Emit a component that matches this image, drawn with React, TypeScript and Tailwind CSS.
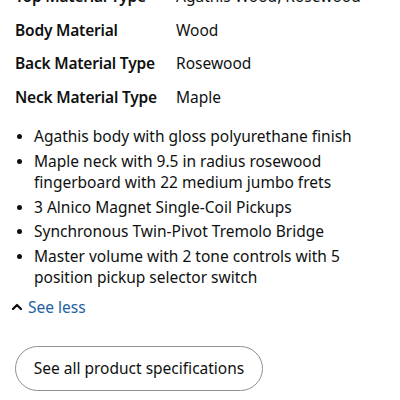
import { ChevronUp } from "lucide-react";

const specs: [string, string][] = [
    ["Top Material Type", "Agathis Wood, Rosewood"],
    ["Body Material", "Wood"],
    ["Back Material Type", "Rosewood"],
    ["Neck Material Type", "Maple"],
];

const features = [
    "Agathis body with gloss polyurethane finish",
    "Maple neck with 9.5 in radius rosewood fingerboard with 22 medium jumbo frets",
    "3 Alnico Magnet Single-Coil Pickups",
    "Synchronous Twin-Pivot Tremolo Bridge",
    "Master volume with 2 tone controls with 5 position pickup selector switch",
];

export default function App() {
    return (
        <div className="w-[400px] h-[400px] overflow-hidden bg-white text-[#0f1111] font-['Noto_Sans',sans-serif]">
            <div className="px-[15px] -mt-[20px]">
                {specs.map(([label, value]) => (
                    <div key={label} className="flex h-[33.5px] items-center text-[15.5px]">
                        <span className="w-[161px] font-semibold tracking-[-0.2px]">{label}</span>
                        <span>{value}</span>
                    </div>
                ))}
            </div>
            <ul className="mt-[12px] pl-[34px] pr-4 text-[15.5px] leading-[21.5px] list-disc marker:text-[14px]">
                {features.map((f) => (
                    <li key={f} className="mb-[3px]">
                        {f}
                    </li>
                ))}
            </ul>
            <button className="mt-[7px] ml-[9px] flex items-center gap-[3px] text-[15.5px] text-[#2162a1]">
                <ChevronUp size={16} strokeWidth={3.5} className="text-[#0f1111]" />
                See less
            </button>
            <button className="mt-[27px] ml-[15px] h-[45px] w-[248px] rounded-full border border-[#8d9096] text-[15.5px]">
                See all product specifications
            </button>
        </div>
    );
}
